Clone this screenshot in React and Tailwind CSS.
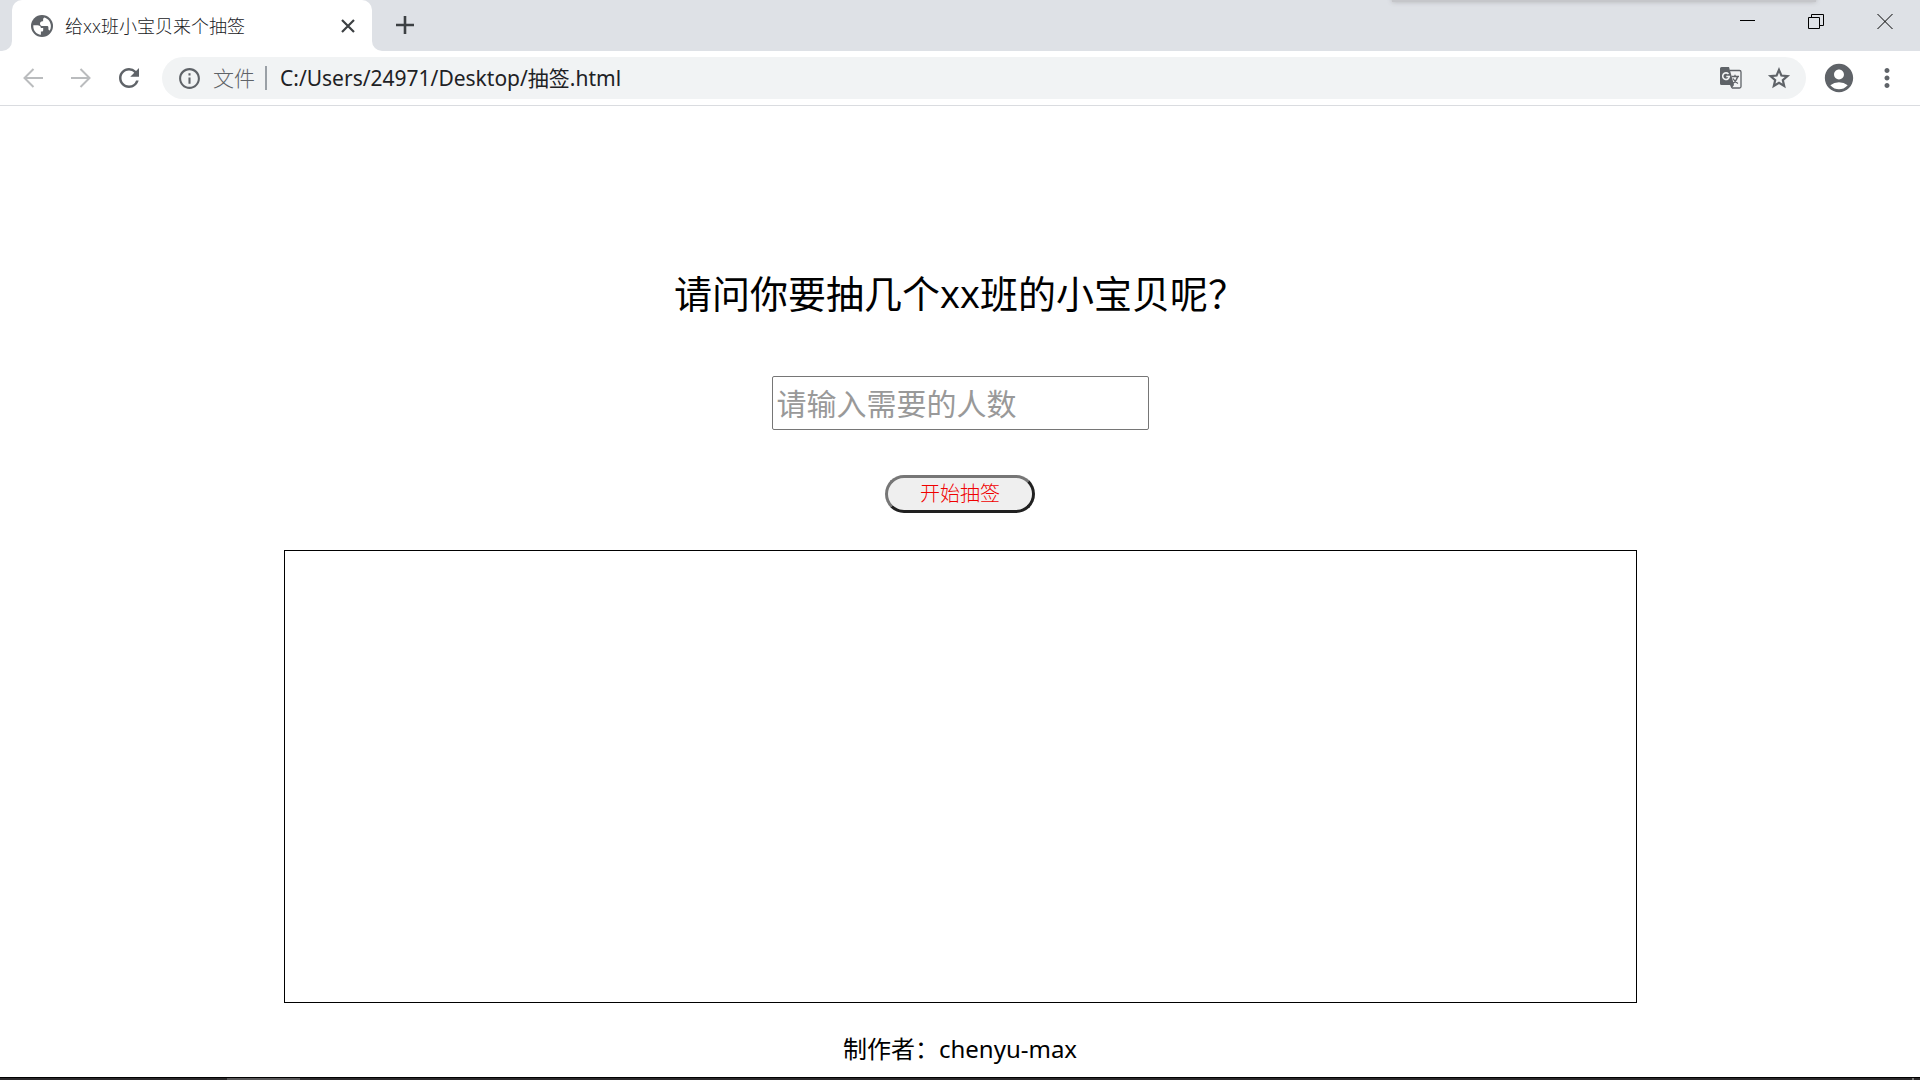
import { MdAccountCircle, MdMoreVert, MdRefresh, MdInfoOutline } from "react-icons/md";

const UI_FONT = "font-['Open_Sans','Noto_Sans_CJK_SC',sans-serif]";
const TEXT_FONT = "font-['Noto_Sans','Noto_Sans_CJK_SC',sans-serif]";

function ArrowIcon({ flip }) {
  return (
    <svg viewBox="0 0 20 20" className={flip ? "size-5 rotate-180" : "size-5"} fill="none" stroke="currentColor" strokeWidth="2" aria-hidden="true">
      <path d="M20 10H2M10.5 1 1.5 10l9 9" />
    </svg>
  );
}

function GlobeIcon() {
  return (
    <svg viewBox="0 0 22 22" className="size-[22px]" aria-hidden="true">
      <circle cx="11" cy="11" r="11" fill="currentColor" />
      <path fill="#fff" d="M2.300 10.300h4.200c2 0 3.300.9 3.400 2.600h2.300v2.400c0 .8-.6 1.300-1.400 1.300h-.9v3.200C5.200 19.400 2 15.600 2.300 10.300zM13.300 2.400C17 3.400 19.800 6.800 19.900 11c0 1.700-.4 3.200-1.100 4.400-.9-.1-1.400-.7-1.400-1.700v-1.200c0-.8-.5-1.400-1.300-1.400h-4.300c-1.700 0-2.800-1-2.800-2.400 0-1.500 1-2.400 2.500-2.400h.6V4.500c0-1 .4-1.700 1.200-2.100z" />
    </svg>
  );
}

function TranslateIcon() {
  return (
    <svg viewBox="0 0 22 22" className="size-[22px]" fill="none" aria-hidden="true">
      <path d="M10 3.500h9.500a1.500 1.500 0 0 1 1.500 1.500v14.500a1.500 1.500 0 0 1-1.500 1.500h-7.500" stroke="currentColor" strokeWidth="1.3" />
      <path d="M11.500 9.500h7.500M15 7.800v1.700M17.700 9.500c-.8 3-2.700 5.500-5 7M13 11.500c1 2 2.800 4 5 5" stroke="currentColor" strokeWidth="1.300" />
      <path d="M1.500 0H9l5 18H1.500A1.500 1.500 0 0 1 0 16.500v-15A1.500 1.500 0 0 1 1.500 0zM10 18h4l-2.500 3.500z" fill="currentColor" />
      <path d="M8.500 7A3.300 3.300 0 1 0 9.300 9.500H6.300" stroke="#f1f3f4" strokeWidth="1.600" />
    </svg>
  );
}

function StarIcon() {
  return (
    <svg viewBox="0 0 24 24" className="size-[26px]" fill="none" stroke="currentColor" strokeWidth="2" aria-hidden="true">
      <path d="M12 4.500l2.200 5.200 5.600.5-4.300 3.700 1.300 5.500-4.800-2.900-4.800 2.900 1.300-5.500-4.300-3.700 5.600-.5z" />
    </svg>
  );
}

function TabStrip() {
  return (
    <header className="relative flex h-[51px] bg-[#dee1e6]">
      <div className="absolute -top-2 right-[104px] h-[10px] w-[424px] bg-[#c5c6ca] shadow-[0_0_5px_#b4b5b8]" />
      <div className="w-3 bg-white">
        <div className="h-full rounded-br-[10px] bg-[#dee1e6]" />
      </div>
      <div className="bg-[#dee1e6]">
        <div className="flex h-full w-[360px] items-center rounded-t-[10px] bg-white pl-[19px] pr-[17px] text-[#202124]">
          <span className="text-[#5f6368]"><GlobeIcon /></span>
          <h2 className="ml-3 flex-1 text-[18px] leading-6 font-light">给xx班小宝贝来个抽签</h2>
          <button type="button" aria-label="关闭标签页" className="text-[#3c4043]">
            <svg viewBox="0 0 14 14" className="size-[14px]" fill="none" stroke="currentColor" strokeWidth="2.2" aria-hidden="true">
              <path d="M1 1l12 12M13 1 1 13" />
            </svg>
          </button>
        </div>
      </div>
      <div className="flex-1 bg-white">
        <div className="flex h-full items-start justify-between rounded-bl-[10px] bg-[#dee1e6]">
          <button type="button" aria-label="新标签页" className="mt-4 ml-6 text-[#3c4043]">
            <svg viewBox="0 0 18 18" className="size-[18px]" fill="none" stroke="currentColor" strokeWidth="2.6" aria-hidden="true">
              <path d="M9 0v18M0 9h18" />
            </svg>
          </button>
          <div className="mt-[13px] mr-[27px] flex gap-[53px] text-black">
            <button type="button" aria-label="最小化">
              <svg viewBox="0 0 16 16" className="size-4" fill="none" stroke="currentColor" aria-hidden="true">
                <path d="M1 7.500h15" />
              </svg>
            </button>
            <button type="button" aria-label="还原">
              <svg viewBox="0 0 16 16" className="size-4" fill="none" stroke="currentColor" aria-hidden="true">
                <path d="M.5 4.500h11v11H.5zM3.500 4.500v-3h12v11h-4" />
              </svg>
            </button>
            <button type="button" aria-label="关闭">
              <svg viewBox="0 0 16 16" className="size-4" fill="none" stroke="currentColor" aria-hidden="true">
                <path d="M.5 1l15 15M15.500 1l-15 15" />
              </svg>
            </button>
          </div>
        </div>
      </div>
    </header>
  );
}

function Toolbar() {
  return (
    <nav className="flex h-[55px] items-center border-b border-[#dadce0] bg-white pl-[23px] pr-[18px] text-[#5f6368]">
      <div className="flex items-center gap-7">
        <button type="button" aria-label="后退" className="text-[#babcbe]"><ArrowIcon /></button>
        <button type="button" aria-label="前进" className="text-[#babcbe]"><ArrowIcon flip /></button>
      </div>
      <button type="button" aria-label="重新加载" className="ml-[23px]"><MdRefresh className="size-[30px]" /></button>
      <div className="ml-[18px] flex h-[42px] flex-1 items-center rounded-full bg-[#f1f3f4] pl-[15px] pr-[14px]">
        <MdInfoOutline className="size-[25px]" aria-hidden="true" />
        <label htmlFor="address" className="ml-[11px] border-r-2 border-[#9aa0a6] pr-[10px] text-[21px] leading-6 font-light">文件</label>
        <input id="address" defaultValue="C:/Users/24971/Desktop/抽签.html" className={`ml-[13px] min-w-0 flex-1 bg-transparent text-[21px] leading-8 text-[#202124] outline-none ${TEXT_FONT}`} />
        <button type="button" aria-label="翻译此页"><TranslateIcon /></button>
        <button type="button" aria-label="添加书签" className="ml-6"><StarIcon /></button>
      </div>
      <button type="button" aria-label="用户" className="ml-4"><MdAccountCircle className="size-[34px]" /></button>
      <button type="button" aria-label="菜单" className="ml-4"><MdMoreVert className="size-[30px]" /></button>
    </nav>
  );
}

export default function App() {
  return (
    <div className={`flex min-h-screen flex-col bg-white text-black ${UI_FONT}`}>
      <TabStrip />
      <Toolbar />
      <main className="flex flex-1 flex-col items-center pt-[162px]">
        <label htmlFor="count" className="text-[38px] leading-[50px]">请问你要抽几个xx班的小宝贝呢？</label>
        <input id="count" placeholder="请输入需要的人数" className="mt-[58px] h-[54px] w-[377px] rounded-xs border border-[#767676] px-1 text-[30px] leading-10 outline-none placeholder:text-[#999999]" />
        <button type="button" className="mt-[45px] h-[38px] w-[150px] rounded-full border-3 border-t-[#767676] border-r-[#212121] border-b-[#212121] border-l-[#767676] bg-[#efefef] text-[20px] leading-6 font-light text-[#f00000]">开始抽签</button>
        <section aria-label="抽签结果" className="mt-[37px] h-[453px] w-full max-w-[1353px] border border-black" />
        <p className={`mt-[30px] text-[24px] leading-8 ${TEXT_FONT}`}>制作者：chenyu-max</p>
      </main>
      <footer className="flex h-[3px] justify-between border-t border-black bg-[#2b292a]">
        <div className="ml-[227px] w-[73px] bg-[#5a5859]" />
        <div className="w-2 border-l-2 border-[#777777]" />
      </footer>
    </div>
  );
}
